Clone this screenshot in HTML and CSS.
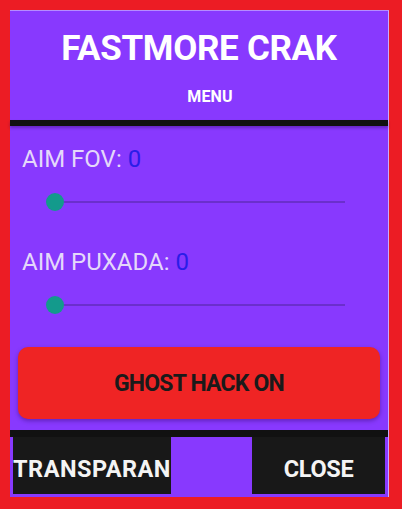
FILE: index.html
```html
<!DOCTYPE html>
<html>
<head>
<meta charset="utf-8">
<link rel="stylesheet" href="styles.css">
</head>
<body>
<div class="panel">
  <header class="head">
    <h1 class="title">FASTMORE CRAK</h1>
    <div class="sub">MENU</div>
  </header>
  <div class="rule"></div>
  <section class="controls">
    <div class="control">
      <div class="label">AIM FOV: <span class="val">0</span></div>
      <div class="slider"><span class="thumb"></span><span class="track"></span></div>
    </div>
    <div class="control">
      <div class="label">AIM PUXADA: <span class="val">0</span></div>
      <div class="slider"><span class="thumb"></span><span class="track"></span></div>
    </div>
    <button class="ghost">GHOST HACK ON</button>
  </section>
  <div class="rule rule-bottom"></div>
  <div class="actions">
    <button class="act act-left">TRANSPARAN</button>
    <button class="act act-right">CLOSE</button>
  </div>
</div>
</body>
</html>
```
FILE: styles.css
```css
html, body {
  margin: 0;
  padding: 0;
}
body {
  background: #ec1c24;
  width: 402px;
  height: 509px;
  overflow: hidden;
  font-family: Roboto, "Liberation Sans", sans-serif;
}
.panel {
  margin: 10px 0 0 10px;
  width: 378px;
  height: 486px;
  background: #8839fe;
  border-right: 1px solid #c9a9ff;
  border-top: 1px solid #b58cff;
  display: flex;
  flex-direction: column;
}
.panel > * {
  flex-shrink: 0;
}
.head {
  height: 109px;
  display: flex;
  flex-direction: column;
  align-items: center;
}
.title {
  margin: 16px 0 0;
  font-size: 35px;
  line-height: 44px;
  font-weight: 700;
  color: #ffffff;
  letter-spacing: -0.3px;
}
.sub {
  margin-top: 17px;
  padding-left: 22px;
  font-size: 16px;
  line-height: 18px;
  font-weight: 700;
  color: #ffffff;
  letter-spacing: 0.2px;
}
.rule {
  height: 6px;
  background: #111111;
  box-shadow: 0 2px 3px rgba(40, 0, 90, 0.35);
}
.rule-bottom {
  height: 7px;
  box-shadow: none;
}
.controls {
  height: 304px;
  display: flex;
  flex-direction: column;
  padding: 19px 8px 0 8px;
  box-sizing: border-box;
}
.control {
  display: flex;
  flex-direction: column;
  flex-shrink: 0;
}
.control + .control {
  margin-top: 26px;
}
.label {
  padding-left: 4px;
  font-size: 24px;
  line-height: 28px;
  color: #e4d8fa;
}
.val {
  color: #2a1de8;
}
.slider {
  margin: 9px 0 0 28px;
  width: 310px;
  height: 40px;
  display: flex;
  align-items: center;
}
.thumb {
  width: 18px;
  height: 18px;
  border-radius: 50%;
  background: #139a8c;
  flex: none;
}
.track {
  width: 281px;
  height: 2px;
  background: #6b2fcc;
}
.ghost {
  flex-shrink: 0;
  margin-top: 22px;
  height: 72px;
  border: none;
  border-radius: 10px;
  background: #ef2424;
  box-shadow: 0 2px 4px rgba(40, 0, 90, 0.4);
  font-family: Roboto, "Liberation Sans", sans-serif;
  font-size: 23px;
  font-weight: 700;
  color: #1a1a1a;
  letter-spacing: -0.8px;
}
.actions {
  height: 57px;
  display: flex;
  justify-content: space-between;
  padding: 0 3px 3px 3px;
}
.act {
  border: none;
  background: #181818;
  color: #f4f4f4;
  font-family: Roboto, "Liberation Sans", sans-serif;
  font-size: 23.5px;
  font-weight: 700;
  padding: 6px 0 0;
  white-space: nowrap;
  overflow: hidden;
}
.act-left {
  width: 158px;
  letter-spacing: 0.5px;
}
.act-right {
  width: 133px;
  letter-spacing: -0.3px;
}
```
